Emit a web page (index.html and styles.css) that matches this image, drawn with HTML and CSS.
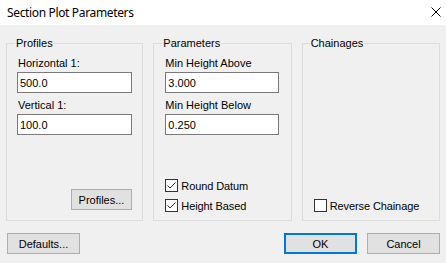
FILE: index.html
```html
<!DOCTYPE html>
<html lang="en">

<head>
  <meta charset="UTF-8">
  <title>Section Plot Parameters</title>
  <link rel="stylesheet" href="styles.css">
</head>

<body>
  <header class="titlebar">
    <span class="title">Section Plot Parameters</span>
    <svg class="close" width="10" height="10" viewBox="0 0 10 10">
      <path d="M0.5 0.5 L9.5 9.5 M9.5 0.5 L0.5 9.5" stroke="#000" stroke-width="1" fill="none" />
    </svg>
  </header>
  <main class="dialog">
    <div class="groups">
      <fieldset class="group group-profiles">
        <legend>Profiles</legend>
        <div class="group-body">
          <label class="field-label" for="horizontal">Horizontal 1:</label>
          <input class="field" type="text" id="horizontal" value="500.0">
          <label class="field-label" for="vertical">Vertical 1:</label>
          <input class="field" type="text" id="vertical" value="100.0">
          <button class="btn btn-profiles" type="button">Profiles...</button>
        </div>
      </fieldset>
      <fieldset class="group group-params">
        <legend>Parameters</legend>
        <div class="group-body">
          <label class="field-label" for="above">Min Height Above</label>
          <input class="field" type="text" id="above" value="3.000">
          <label class="field-label" for="below">Min Height Below</label>
          <input class="field" type="text" id="below" value="0.250">
          <div class="checks">
            <label class="check"><span class="box"><svg width="11" height="11" viewBox="0 0 11 11"><path d="M1.5 5.5 L4 8 L9.5 2.5" stroke="#333" stroke-width="1" fill="none" /></svg></span>Round Datum</label>
            <label class="check"><span class="box"><svg width="11" height="11" viewBox="0 0 11 11"><path d="M1.5 5.5 L4 8 L9.5 2.5" stroke="#333" stroke-width="1" fill="none" /></svg></span>Height Based</label>
          </div>
        </div>
      </fieldset>
      <fieldset class="group group-chain">
        <legend>Chainages</legend>
        <div class="group-body">
          <div class="checks">
            <label class="check"><span class="box"></span>Reverse Chainage</label>
          </div>
        </div>
      </fieldset>
    </div>
    <footer class="actions">
      <button class="btn" type="button">Defaults...</button>
      <span class="spacer"></span>
      <button class="btn btn-default" type="button">OK</button>
      <button class="btn" type="button">Cancel</button>
    </footer>
  </main>
</body>

</html>
```

FILE: styles.css
```css
body {
  margin: 0;
  width: 446px;
  height: 263px;
  background-color: #f0f0f0;
  font-family: "Liberation Sans", Arial, sans-serif;
  font-size: 11px;
  color: #000;
  overflow: hidden;
}

.titlebar {
  height: 25px;
  background-color: #fff;
  display: flex;
  align-items: center;
  justify-content: space-between;
  padding: 0 5px 0 7px;
}

.title {
  font-family: "Noto Sans", sans-serif;
  font-size: 12px;
  letter-spacing: -0.35px;
}

.close {
  display: block;
  margin-top: -1px;
}

.dialog {
  padding: 11px 6px 0 6px;
}

.groups {
  display: flex;
  gap: 10px;
}

.group {
  margin: 0;
  height: 185px;
  box-sizing: border-box;
  border: 1px solid #dcdcdc;
  padding: 7px 10px 6px 10px;
  min-width: 0;
}

.group-profiles {
  width: 138px;
}

.group-params,
.group-chain {
  width: 139px;
}

.group legend {
  line-height: 14px;
  padding: 0 1px;
  margin-left: -2px;
}

.group-chain legend {
  margin-left: -3px;
}

.group-body {
  display: flex;
  flex-direction: column;
  align-items: flex-start;
  height: 100%;
}

.field-label {
  line-height: 13px;
  padding-left: 1px;
  margin-bottom: 2px;
}

.field {
  width: 115px;
  height: 21px;
  box-sizing: border-box;
  border: 1px solid #7a7a7a;
  background: #fff;
  padding: 0 2px;
  margin: 0 0 6px 0;
  font: inherit;
  color: #000;
  outline: none;
}

.group-params .field {
  width: 114px;
  margin-left: 1px;
}

.btn {
  height: 21px;
  width: 73px;
  box-sizing: border-box;
  border: 1px solid #adadad;
  background-color: #e1e1e1;
  font: inherit;
  color: #000;
  padding: 0;
}

.btn-profiles {
  width: 61px;
  margin-top: auto;
  margin-left: 54px;
  margin-bottom: 4px;
}

.btn-default {
  border: 2px solid #0078d7;
}

.checks {
  margin-top: auto;
  display: flex;
  flex-direction: column;
  gap: 3px;
}

.group-params .checks {
  margin-left: 1px;
}

.check {
  display: flex;
  align-items: center;
  gap: 3px;
  height: 17px;
  letter-spacing: -0.1px;
}

.group-chain .check {
  margin-left: 1px;
}

.box {
  width: 13px;
  height: 13px;
  box-sizing: border-box;
  border: 1px solid #333;
  background: #fff;
  display: flex;
}

.actions {
  display: flex;
  gap: 10px;
  margin-top: 12px;
  padding: 0 0 0 1px;
}

.spacer {
  flex-grow: 1;
}
```
